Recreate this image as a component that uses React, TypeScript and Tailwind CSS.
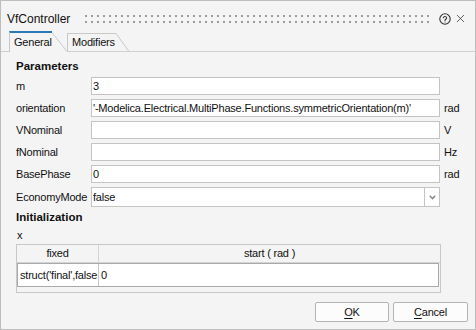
import { X } from "lucide-react";

const params = [
  { name: "m", value: "3", unit: "" },
  { name: "orientation", value: "'-Modelica.Electrical.MultiPhase.Functions.symmetricOrientation(m)'", unit: "rad" },
  { name: "VNominal", value: "", unit: "V" },
  { name: "fNominal", value: "", unit: "Hz" },
  { name: "BasePhase", value: "0", unit: "rad" },
];

function Grip() {
  return (
    <svg width="346" height="8" className="ml-[15px] shrink-0">
      <defs>
        <pattern id="dots" width="6" height="8" patternUnits="userSpaceOnUse">
          <rect x="0" y="0" width="2" height="2" fill="#9c9c9c" />
          <rect x="0" y="6" width="2" height="2" fill="#9c9c9c" />
        </pattern>
      </defs>
      <rect width="346" height="8" fill="url(#dots)" />
    </svg>
  );
}

function HelpIcon() {
  return (
    <svg width="12" height="12" viewBox="0 0 12 12" className="ml-[8px] shrink-0" fill="none" stroke="#333" strokeWidth="1.1">
      <circle cx="6" cy="6" r="5.2" />
      <path d="M4.3 4.7a1.75 1.75 0 0 1 3.4.4c0 1.1-1.7 1.3-1.7 2.4" strokeLinecap="round" />
      <circle cx="6" cy="9" r="0.6" fill="#333" stroke="none" />
    </svg>
  );
}

export default function App() {
  return (
    <div className="w-[476px] h-[330px] border border-[#bdbdbd] bg-[#f4f4f4] flex flex-col text-[#111] font-['Liberation_Sans',Arial,sans-serif] text-[11px] tracking-[-0.2px] overflow-hidden">
      {/* title bar */}
      <div className="h-[30px] pt-[5px] flex items-center pl-[6px]">
        <span className="text-[12px] tracking-normal leading-none">VfController</span>
        <Grip />
        <HelpIcon />
        <X size={13} strokeWidth={1.4} className="ml-[3px] text-[#333]" />
      </div>

      {/* tabs */}
      <div className="h-[21px] flex items-end">
        <div className="w-[8px] h-full border-b border-[#d0d0d0]" />
        <div className="h-[21px] flex">
          <div className="w-[43px] border-l border-l-[#c8c8c8] border-t-2 border-t-[#2b78b4] pl-[4px] flex items-center">
            General
          </div>
          <svg width="15" height="21" className="shrink-0">
            <line x1="0" y1="1.5" x2="15" y2="20.5" stroke="#c8c8c8" />
          </svg>
        </div>
        <div className="h-[19px] flex">
          <div className="w-[49px] border-l border-t border-b border-[#c8c8c8] border-b-[#d0d0d0] pl-[4px] flex items-center">
            Modifiers
          </div>
          <svg width="13" height="19" className="shrink-0">
            <line x1="0" y1="0.5" x2="13" y2="18.5" stroke="#c8c8c8" />
            <line x1="0" y1="18.5" x2="13" y2="18.5" stroke="#d0d0d0" />
          </svg>
        </div>
        <div className="flex-1 h-full border-b border-[#d0d0d0]" />
      </div>

      {/* panel */}
      <div className="flex-1 pl-[15px] flex flex-col">
        <div className="mt-[7px] leading-[14px] font-bold text-[11.5px] tracking-normal">Parameters</div>
        <div className="mt-[4px] grid grid-cols-[75px_349px_1fr] gap-y-[4px]">
          {params.map((p) => (
            <div key={p.name} className="contents">
              <div className="h-[18px] flex items-center">{p.name}</div>
              <div className="h-[18px] border border-[#c4c4c4] bg-white pl-[1px] flex items-center whitespace-nowrap overflow-hidden">
                {p.value}
              </div>
              <div className="h-[18px] flex items-center pl-[4px]">{p.unit}</div>
            </div>
          ))}
          <div className="h-[20px] flex items-center">EconomyMode</div>
          <div className="h-[20px] flex">
            <div className="flex-1 border border-[#c4c4c4] bg-white pl-[1px] flex items-center">false</div>
            <div className="w-[15px] border-y border-r border-[#c4c4c4] bg-white flex items-center justify-center">
              <svg width="7" height="5" viewBox="0 0 7 5" fill="none" stroke="#8a8a8a" strokeWidth="1.6">
                <path d="M0.8 0.8l2.7 2.7 2.7-2.7" />
              </svg>
            </div>
          </div>
          <div />
        </div>

        <div className="mt-[3px] leading-[14px] font-bold text-[11.5px] tracking-normal">Initialization</div>
        <div className="mt-[4px] leading-[14px] pl-[1px]">x</div>

        <div className="mt-[2px] w-[425px] border border-[#c8c8c8] bg-[#f4f4f4] flex flex-col">
          <div className="h-[18px] flex border-b border-[#d4d4d4]">
            <div className="w-[82px] border-r border-[#d4d4d4] flex items-center justify-center">fixed</div>
            <div className="flex-1 flex items-center justify-center">start ( rad )</div>
          </div>
          <div className="h-[24px] mr-[1px] flex border border-[#a9a9a9] bg-white">
            <div className="w-[81px] border-r border-[#c8c8c8] pl-[2px] flex items-center whitespace-nowrap overflow-hidden">
              struct('final',false,
            </div>
            <div className="flex-1 pl-[2px] flex items-center">0</div>
          </div>
          <div className="h-[5px]" />
        </div>
      </div>

      {/* footer */}
      <div className="h-[20px] mb-[7px] pr-[7px] flex justify-end gap-[4px]">
        <button className="w-[74px] h-[20px] border border-[#b4b4b4] bg-[#fcfcfc] rounded-[2px] text-[11px]">
          <span className="underline underline-offset-2">O</span>K
        </button>
        <button className="w-[75px] h-[20px] border border-[#b4b4b4] bg-[#fcfcfc] rounded-[2px] text-[11px]">
          <span className="underline underline-offset-2">C</span>ancel
        </button>
      </div>
    </div>
  );
}
